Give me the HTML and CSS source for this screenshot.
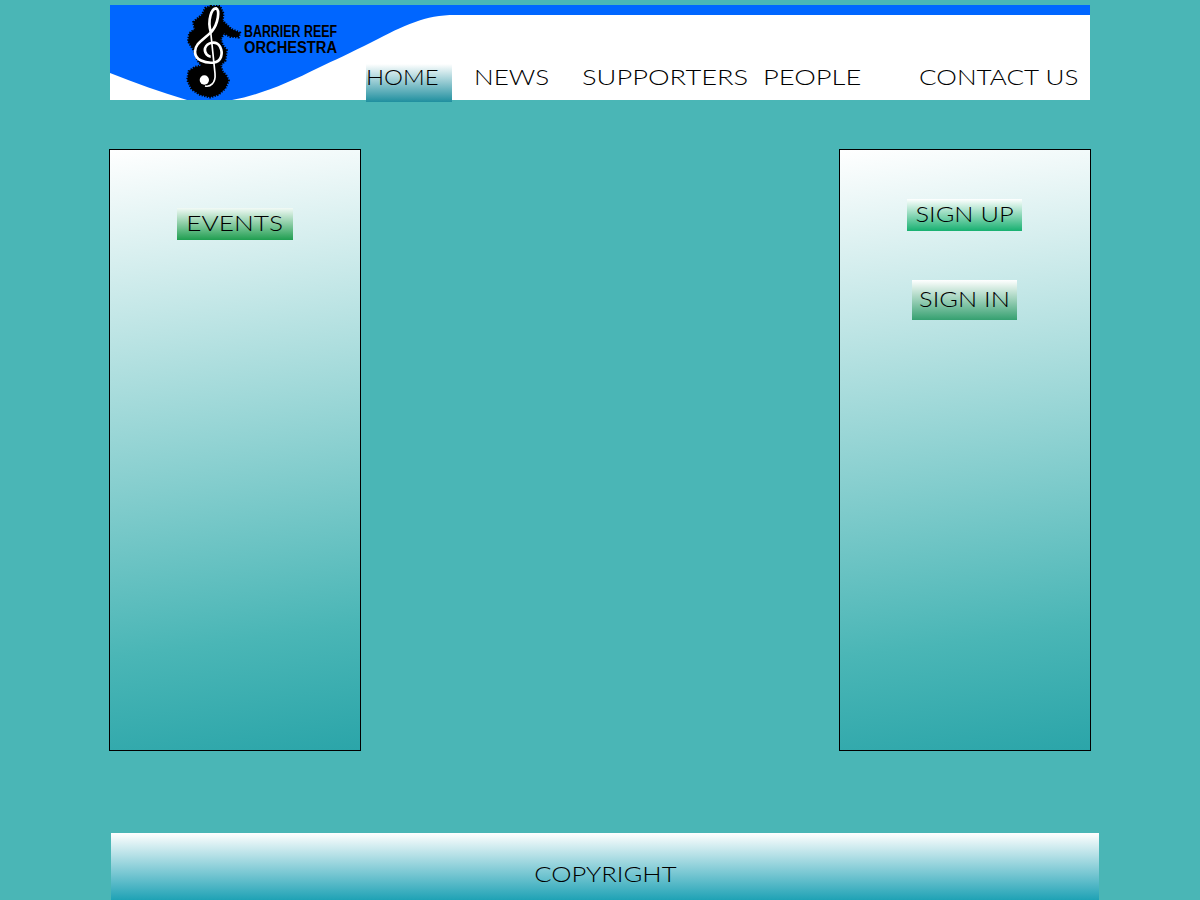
FILE: index.html
```html
<!DOCTYPE html>
<html lang="en">
<head>
  <meta charset="utf-8">
  <title>Barrier Reef Orchestra</title>
  <meta name="viewport" content="width=device-width, initial-scale=1">
  <link rel="stylesheet" href="styles.css">
</head>
<body>
  <div class="page">
    <header class="header">
      <svg class="banner" viewBox="0 0 980 95" width="980" height="95" aria-hidden="true">
        <path fill="#0066ff" d="M0 0H980V10H345C315 10 295 20 262 37C240 48 225 55 208 63C180 77 150 90 122 95H77C50 87 25 78 0 68Z"/>
        <g transform="translate(60 -5) scale(.3333)">
          <path class="horse" d="M122 18L150 18L160 40L158 62L168 72L185 88L210 98L206 112L180 110L162 100L152 118L158 135L170 150L166 182L152 196L158 215L168 225L176 242L165 266L145 284L120 292L90 284L65 268L52 240L56 214L75 201L94 197L82 180L72 152L54 124L58 100L74 88L70 66L96 44L106 24Z"/>
          <path class="clef" d="M122 95C112 60 125 25 138 25C150 30 145 70 125 95C100 120 75 130 75 155C75 180 105 190 130 188C155 185 160 160 150 140C140 122 112 125 105 145C102 160 115 170 122 170"/>
          <path class="clef clef-thin" d="M122 95L135 220C138 250 120 262 105 258"/>
          <circle class="clef-dot" cx="103" cy="240" r="14"/>
        </g>
        <text class="logo-top" x="134" y="32" textLength="93" lengthAdjust="spacingAndGlyphs">BARRIER REEF</text>
        <text class="logo-bottom" x="134" y="48" textLength="93" lengthAdjust="spacingAndGlyphs">ORCHESTRA</text>
      </svg>
      <nav class="nav">
        <a class="nav-item active" href="#"><span class="home-label">HOME</span></a>
        <a class="nav-item" href="#"><span>NEWS</span></a>
        <a class="nav-item" href="#"><span class="wide-label">SUPPORTERS</span></a>
        <a class="nav-item" href="#"><span class="wide-label">PEOPLE</span></a>
        <a class="nav-item" href="#"><span>CONTACT US</span></a>
      </nav>
    </header>

    <main class="main">
      <aside class="panel panel-left">
        <a class="btn btn-events" href="#"><span>EVENTS</span></a>
      </aside>
      <aside class="panel panel-right">
        <a class="btn btn-signup" href="#"><span>SIGN UP</span></a>
        <a class="btn btn-signin" href="#"><span>SIGN IN</span></a>
      </aside>
    </main>

    <footer class="footer"><span>COPYRIGHT</span></footer>
  </div>
</body>
</html>
```

FILE: styles.css
```css
*, *::before, *::after { box-sizing: border-box; }
html, body { margin: 0; padding: 0; height: 100%; overflow: hidden; }
body {
  background-color: #4ab6b6;
  font-family: Lato, "Liberation Sans", sans-serif;
  font-weight: 300;
  color: #000;
}
a { color: inherit; text-decoration: none; }
.page { width: 980px; margin: 5px 0 0 110px; }

/* Header */
.header { position: relative; height: 95px; background: #fff; }
.banner { position: absolute; top: 0; left: 0; display: block; }
.horse { fill: #000; stroke: #000; stroke-width: 7; stroke-dasharray: 4 4; }
.clef { fill: none; stroke: #fff; stroke-width: 8; }
.clef-thin { stroke-width: 5; }
.clef-dot { fill: #fff; }
.logo-top, .logo-bottom { font-family: "Liberation Sans Narrow", "Liberation Sans", sans-serif; font-weight: 700; font-size: 16px; fill: #000; }
.nav {
  position: relative;
  display: grid;
  grid-template-columns: 108px 108px 181px 156px 1fr;
  height: 97px;
  padding: 59px 0 0 256px;
}
.nav-item { display: block; height: 38px; font-size: 21px; line-height: 26px; white-space: nowrap; }
.nav-item span { display: inline-block; transform: scaleX(1.24); transform-origin: left center; }
.nav-item .home-label { transform: scaleX(1.14); }
.nav-item .wide-label { transform: scaleX(1.3); }
.active { width: 86px; background: linear-gradient(#ffffff, #1f8f9f); }

/* Panels */
.main { display: flex; justify-content: space-between; margin: 49px -1px 0; }
.panel {
  display: flex;
  flex-direction: column;
  align-items: center;
  width: 252px;
  height: 602px;
  border: 1px solid #000;
  background: linear-gradient(172deg, #ffffff 0%, #4ab6b6 80%, #2ba5a9 100%);
}
.panel-left { padding-top: 58px; }
.panel-right { padding: 49px 2px 0 0; gap: 49px; }
.btn { display: flex; align-items: center; justify-content: center; font-size: 21px; line-height: 26px; }
.btn span { position: relative; top: -1px; transform: scaleX(1.25); }
.panel-right .btn span { left: 1px; transform: scaleX(1.21); }
.btn-events { width: 116px; height: 32px; background: linear-gradient(#f2faf6, #1f9e50); }
.btn-signup { width: 115px; height: 32px; background: linear-gradient(#ffffff, #17b070); }
.btn-signin { width: 105px; height: 40px; background: linear-gradient(#ffffff, #35a070); }

/* Footer */
.footer {
  display: flex;
  align-items: flex-end;
  justify-content: center;
  width: 988px;
  height: 67px;
  margin: 82px 0 0 1px;
  padding-bottom: 13px;
  font-size: 21px;
  line-height: 26px;
  background: linear-gradient(#ffffff, #1fa2b5);
}
.footer span { transform: scaleX(1.22); }
```
